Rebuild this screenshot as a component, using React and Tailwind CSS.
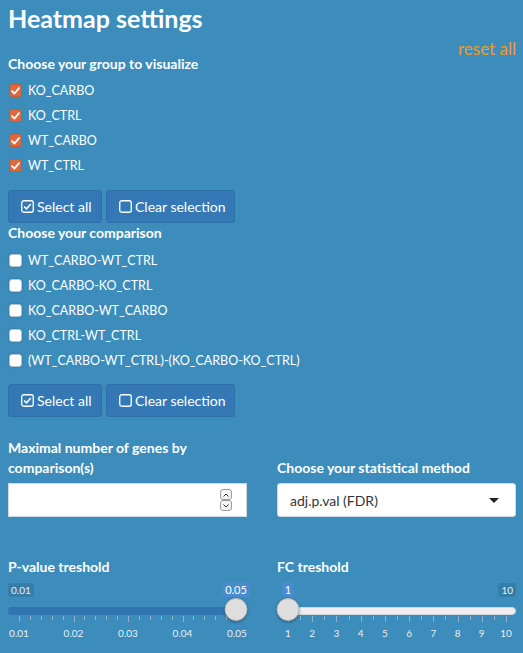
import React from "react";

const font = { fontFamily: "Lato, 'Liberation Sans', sans-serif" };

function Checked() {
  return (
    <span className="w-[13px] h-[13px] rounded-[3px] bg-[#dc6a3e] border border-[#c85a30] flex items-center justify-center shrink-0">
      <svg width="9" height="8" viewBox="0 0 9 8">
        <path d="M1 4.2 L3.5 6.5 L8 1.2" fill="none" stroke="white" strokeWidth="1.8" strokeLinecap="round" strokeLinejoin="round" />
      </svg>
    </span>
  );
}

function Unchecked() {
  return <span className="w-[13px] h-[13px] rounded-[3px] bg-white border border-[#b8c4cc] shadow-[0_0_2px_rgba(0,0,0,0.25)] shrink-0" />;
}

function CheckRow({ label, checked }) {
  return (
    <div className="h-[25px] flex items-center pl-[1px] gap-[6px]">
      {checked ? <Checked /> : <Unchecked />}
      <span className="text-[12.5px] text-white leading-[16px]">{label}</span>
    </div>
  );
}

function SqCheck() {
  return (
    <svg width="13" height="13" viewBox="0 0 13 13" className="shrink-0">
      <rect x="0.75" y="0.75" width="11.5" height="11.5" rx="2" fill="none" stroke="white" strokeWidth="1.3" />
      <path d="M3.2 6.6 L5.5 8.8 L9.8 3.9" fill="none" stroke="white" strokeWidth="1.5" />
    </svg>
  );
}

function Sq() {
  return (
    <svg width="13" height="13" viewBox="0 0 13 13" className="shrink-0">
      <rect x="0.75" y="0.75" width="11.5" height="11.5" rx="2" fill="none" stroke="white" strokeWidth="1.3" />
    </svg>
  );
}

function Buttons() {
  return (
    <div className="flex gap-[4px]">
      <div className="h-[33px] w-[94px] rounded-[3px] bg-[#3479b6] border border-[#2f6ea6] flex items-center pl-[12px] gap-[3px] text-white text-[14px]">
        <SqCheck />
        <span>Select all</span>
      </div>
      <div className="h-[33px] w-[129px] rounded-[3px] bg-[#3479b6] border border-[#2f6ea6] flex items-center pl-[12px] gap-[3px] text-white text-[14px]">
        <Sq />
        <span>Clear selection</span>
      </div>
    </div>
  );
}

function Label({ children, className = "" }) {
  return <div className={"text-[14px] font-bold text-white leading-[14px] " + className}>{children}</div>;
}

function Slider({ min, max, value, valuePos, filled, ticks, labels }) {
  return (
    <div className="relative h-[70px]">
      {min && (
        <div className="absolute left-0 top-[3px] h-[14px] px-[3px] rounded-[3px] bg-black/10 text-[10px] leading-[14px] text-[#e6eef4]">{min}</div>
      )}
      {max && (
        <div className="absolute right-0 top-[3px] h-[14px] px-[3px] rounded-[3px] bg-black/10 text-[10px] leading-[14px] text-[#e6eef4]">{max}</div>
      )}
      <div
        className="absolute top-[2px] h-[15px] px-[3px] rounded-[3px] bg-[#4a8bd0] text-[11px] leading-[15px] text-white -translate-x-1/2"
        style={{ left: valuePos }}
      >
        {value}
      </div>
      {filled ? (
        <div className="absolute left-0 right-[8px] top-[27px] h-[8px] rounded-full bg-[#3174b2]" />
      ) : (
        <div className="absolute left-0 right-0 top-[27px] h-[8px] rounded-full bg-[#eeeeee] border border-[#cfd6db]" />
      )}
      <svg className="absolute left-0 top-[36px]" width="239" height="8">
        {ticks.map((t, i) => (
          <line key={i} x1={t.x + 0.5} x2={t.x + 0.5} y1="0" y2={t.major ? 6 : 4} stroke="#8fb1c9" strokeWidth="1" />
        ))}
      </svg>
      {labels.map((l, i) => (
        <div
          key={i}
          className="absolute top-[47px] text-[10px] leading-[12px] text-[#e6eef4] -translate-x-1/2"
          style={{ left: l.x }}
        >
          {l.t}
        </div>
      ))}
      <div
        className="absolute top-[18px] w-[23px] h-[23px] rounded-full bg-[#dedede] border border-[#b5b5b5] shadow-[0_1px_3px_rgba(0,0,0,0.35)] -translate-x-1/2"
        style={{ left: valuePos }}
      />
    </div>
  );
}

export default function App() {
  const pStart = 11, pEnd = 229;
  const pTicks = [];
  for (let i = 0; i <= 20; i++) {
    pTicks.push({ x: Math.round(pStart + ((pEnd - pStart) * i) / 20), major: i % 5 === 0 });
  }
  const pLabels = ["0.01", "0.02", "0.03", "0.04", "0.05"].map((t, i) => ({ t, x: pStart + ((pEnd - pStart) * i) / 4 }));
  const fTicks = [];
  for (let i = 0; i <= 18; i++) {
    fTicks.push({ x: Math.round(pStart + ((pEnd - pStart) * i) / 18), major: i % 2 === 0 });
  }
  const fLabels = ["1", "2", "3", "4", "5", "6", "7", "8", "9", "10"].map((t, i) => ({ t, x: pStart + ((pEnd - pStart) * i) / 9 }));

  return (
    <div className="bg-[#3c8dbc] min-h-[653px] w-[523px] px-[8px] text-white overflow-hidden" style={font}>
      <div className="pt-[3px] text-[25px] font-bold leading-[30px]">Heatmap settings</div>
      <div className="mt-[7px] text-right text-[17px] leading-[17px] text-[#f39c12]">
        <span className="mr-[-1px]">reset all</span>
      </div>
      <Label>Choose your group to visualize</Label>
      <div className="mt-[7px]">
        <CheckRow label="KO_CARBO" checked />
        <CheckRow label="KO_CTRL" checked />
        <CheckRow label="WT_CARBO" checked />
        <CheckRow label="WT_CTRL" checked />
      </div>
      <div className="mt-[12px]">
        <Buttons />
      </div>
      <Label className="mt-[3px]">Choose your comparison</Label>
      <div className="mt-[8px]">
        <CheckRow label="WT_CARBO-WT_CTRL" />
        <CheckRow label="KO_CARBO-KO_CTRL" />
        <CheckRow label="KO_CARBO-WT_CARBO" />
        <CheckRow label="KO_CTRL-WT_CTRL" />
        <CheckRow label="(WT_CARBO-WT_CTRL)-(KO_CARBO-KO_CTRL)" />
      </div>
      <div className="mt-[11px]">
        <Buttons />
      </div>

      <div className="mt-[21px] grid grid-cols-[239px_239px] gap-x-[30px]">
        <div className="flex flex-col justify-end">
          <div className="text-[14px] font-bold leading-[20px]">
            Maximal number of genes by
            <br />
            comparison(s)
          </div>
          <div className="mt-[5px] h-[34px] bg-white border border-[#d2d6de] flex items-center justify-end pr-[14px]">
            <div className="flex flex-col">
              <div className="w-[12px] h-[11px] rounded-[3px] border border-[#9a9a9a] bg-[#f4f4f4] flex items-center justify-center">
                <svg width="6" height="4" viewBox="0 0 6 4"><path d="M0.5 3.5 L3 1 L5.5 3.5" fill="none" stroke="#333" strokeWidth="1" /></svg>
              </div>
              <div className="w-[12px] h-[11px] rounded-[3px] border border-[#9a9a9a] bg-[#f4f4f4] flex items-center justify-center">
                <svg width="6" height="4" viewBox="0 0 6 4"><path d="M0.5 0.5 L3 3 L5.5 0.5" fill="none" stroke="#333" strokeWidth="1" /></svg>
              </div>
            </div>
          </div>
        </div>
        <div className="flex flex-col justify-end">
          <div className="text-[14px] font-bold leading-[20px]">Choose your statistical method</div>
          <div className="mt-[5px] h-[34px] bg-white border border-[#d2d6de] rounded-[3px] flex items-center justify-between pl-[12px] pr-[16px]">
            <span className="text-[14px] text-[#333]">adj.p.val (FDR)</span>
            <svg width="10" height="5" viewBox="0 0 10 5"><path d="M0 0 L10 0 L5 5 Z" fill="#222" /></svg>
          </div>
        </div>
      </div>

      <div className="mt-[43px] grid grid-cols-[239px_239px] gap-x-[30px]">
        <div>
          <Label>P-value treshold</Label>
          <div className="mt-[6px]">
            <Slider min="0.01" max="" value="0.05" valuePos={228} filled ticks={pTicks} labels={pLabels} />
          </div>
        </div>
        <div>
          <Label>FC treshold</Label>
          <div className="mt-[6px]">
            <Slider min="" max="10" value="1" valuePos={11} filled={false} ticks={fTicks} labels={fLabels} />
          </div>
        </div>
      </div>
    </div>
  );
}
